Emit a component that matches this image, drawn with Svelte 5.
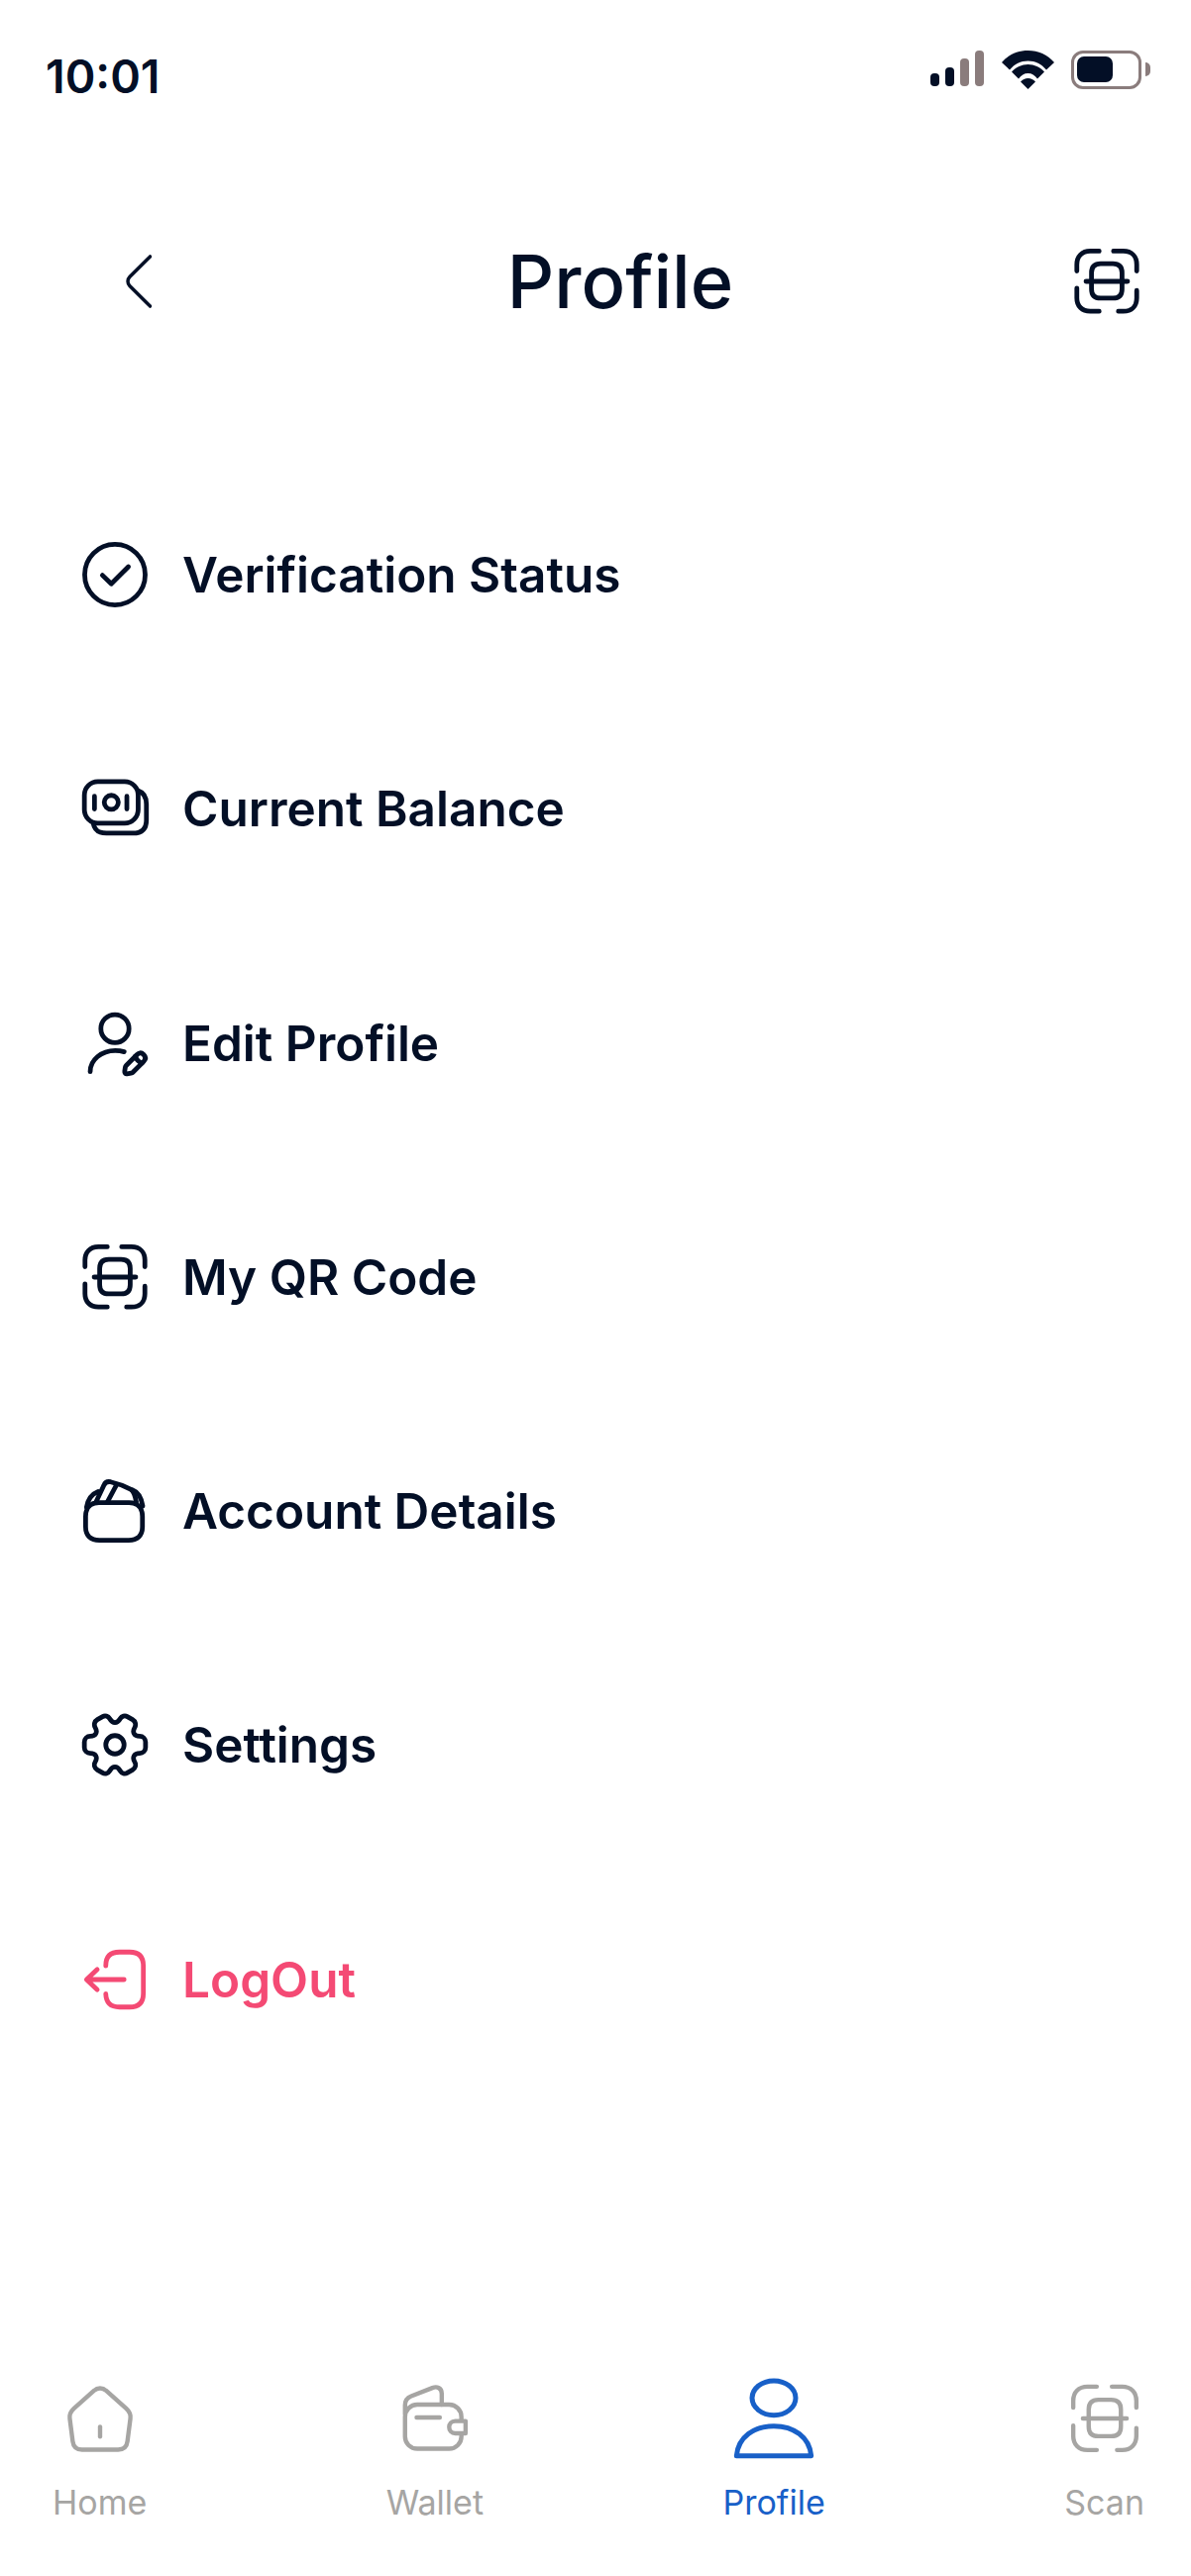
<script>
  const rows = [
    { label: "Verification Status", icon: "check" },
    { label: "Current Balance", icon: "money" },
    { label: "Edit Profile", icon: "user" },
    { label: "My QR Code", icon: "scan" },
    { label: "Account Details", icon: "account" },
    { label: "Settings", icon: "gear" },
    { label: "LogOut", icon: "logout", danger: true },
  ];

  const tabs = [
    { label: "Home", icon: "home" },
    { label: "Wallet", icon: "wallet" },
    { label: "Profile", icon: "person", active: true },
    { label: "Scan", icon: "scan" },
  ];
</script>

{#snippet icon(name)}
  <svg class="ico" viewBox="0 0 24 24" fill="none" stroke="currentColor" stroke-linecap="round" stroke-linejoin="round">
    {#if name === "check"}
      <circle cx="12" cy="12" r="9.9" />
      <path d="M7.9 12.2l2.9 2.8 5.6-5.6" />
    {:else if name === "money"}
      <rect x="2" y="3.2" width="17.600" height="13.600" rx="4.400" />
      <path d="M19.6 6.2c1.8.6 2.7 2 2.7 4.4v5.2c0 3-1.7 4.3-4.4 4.3H9.2c-.8 0-1.5-.1-2-.3-1.2-.4-2-1.4-2.3-2.9" />
      <circle cx="10.8" cy="10" r="2.3" />
      <path d="M5.3 8v4.2M15.9 8v4.2" />
    {:else if name === "user"}
      <circle cx="12" cy="7.2" r="4.6" />
      <path d="M3.9 21.3c0-3.9 3.7-6.9 8.2-6.9.9 0 1.9.1 2.9.4" />
      <path d="M19.21 15.74l-3.54 3.54c-.14.14-.27.4-.3.59l-.19 1.35c-.07.49.27.83.76.76l1.35-.19c.19-.03.46-.16.59-.3l3.54-3.54c.61-.61.9-1.32 0-2.22-.89-.89-1.6-.6-2.21.01Z" />
      <path d="M18.7 16.25c.3 1.08 1.14 1.92 2.22 2.22" />
    {:else if name === "scan"}
      <path d="M2.2 8.6V6.5c0-2.7 1.7-4.4 4.4-4.4h2.9" />
      <path d="M14.2 2.1h3.2c2.7 0 4.4 1.7 4.4 4.4v2.1" />
      <path d="M21.8 15v2.4c0 2.7-1.7 4.4-4.4 4.4h-1.6" />
      <path d="M9.5 21.8H6.6c-2.7 0-4.4-1.7-4.4-4.4V14.200" />
      <path d="M17 9.200v5.300c0 2-1 3-3 3h-4c-2 0-3-1-3-3V9.200c0-2 1-3 3-3h4c2 0 3 1 3 3Z" />
      <path d="M5.200 12h13.600" />
    {:else if name === "account"}
      <path d="M2.400 13.800c0-2.800 1.500-4.500 4.400-4.500h9.800c2.900 0 4.400 1.700 4.400 4.500v3.400c0 2.900-1.700 4.400-4.500 4.400H6.900c-2.800 0-4.500-1.500-4.500-4.400Z" />
      <path d="M5.800 9.100l2.600-5.500c.4-1 1.200-1.300 2.200-1.100 2.200.5 4.500 1.300 6.500 2.400.9.500 1.500 2 1.900 4.200" />
      <path d="M9.500 9.100l2.900-5.400" />
      <path d="M2.700 10.800c.5-2.800 1.700-4.300 3.800-5.100" />
      <path d="M17.700 5.100c1.900.7 3 2.800 3.400 5.300" />
    {:else if name === "gear"}
      <path d="M2 12.880v-1.760c0-1.040.85-1.900 1.900-1.900 1.810 0 2.550-1.280 1.640-2.850-.52-.9-.21-2.070.7-2.590l1.730-.99c.79-.47 1.810-.19 2.280.6l.11.19c.9 1.570 2.380 1.570 3.290 0l.11-.19c.47-.79 1.490-1.070 2.280-.6l1.730.99c.91.520 1.220 1.690.7 2.590-.91 1.570-.17 2.850 1.640 2.850 1.040 0 1.900.85 1.900 1.900v1.760c0 1.040-.85 1.900-1.900 1.900-1.810 0-2.550 1.280-1.640 2.850.52.91.21 2.070-.7 2.590l-1.730.99c-.79.47-1.810.19-2.280-.6l-.11-.19c-.9-1.570-2.380-1.570-3.290 0l-.11.19c-.47.79-1.490 1.070-2.280.6l-1.730-.99a1.900 1.900 0 0 1-.7-2.590c.91-1.570.17-2.850-1.640-2.850-1.050 0-1.900-.86-1.900-1.900Z" />
      <circle cx="12" cy="12" r="3" />
    {:else if name === "logout"}
      <path d="M9 7.500c0-3 1.500-4.500 4.500-4.500h3.300c3 0 4.500 1.500 4.500 4.500v9c0 3-1.500 4.500-4.500 4.500h-3.300c-2.900 0-4.400-1.400-4.500-4.300" />
      <path d="M15 12H2.800M6.200 8.700L2.700 12l3.500 3.300" />
    {:else if name === "home"}
      <path d="M12 2.600c-.7 0-1.300.2-1.800.7L3.900 8.900c-1 .9-1.500 1.900-1.300 3.200l.9 7c.2 1.700 1.200 2.600 2.900 2.600h11.200c1.700 0 2.700-.9 2.900-2.600l.9-7c.2-1.300-.3-2.300-1.300-3.200l-6.300-5.600c-.5-.5-1.100-.7-1.800-.7Z" />
      <path d="M12 14.600v3" />
    {:else if name === "wallet"}
      <rect x="2.700" y="7.700" width="17.500" height="13.700" rx="3.800" />
      <path d="M2.700 10.500V7.900c0-1.400.6-2.300 1.900-2.800l6.600-2.600c1.500-.6 2.900.1 2.900 1.800v3.400" />
      <path d="M6.300 11.700h7.200" />
      <path d="M21.500 12.800h-3.200c-1.200 0-1.900.9-1.900 1.900s.7 1.900 1.900 1.900h3.200Z" fill="white" />
    {:else if name === "person"}
      <ellipse cx="12" cy="5.800" rx="6.600" ry="5.200" />
      <path d="M.7 23.300C1.200 17.600 6 14.300 12 14.300s10.800 3.300 11.300 9Z" />
    {/if}
  </svg>
{/snippet}

<div class="phone">
  <div class="status">
    <span class="time">10:01</span>
    <div class="status-icons">
      <div class="signal">
        <i class="bar on b1"></i>
        <i class="bar on b2"></i>
        <i class="bar b3"></i>
        <i class="bar b4"></i>
      </div>
      <svg class="wifi" viewBox="0 0 53 39">
        <path d="M0 12C7 4 16 0 26.500 0S46 4 53 12l-8 7.500C40 13.500 34 10.500 26.500 10.500S13 13.500 8 19.500Z" />
        <path d="M10 21.500C14.500 16.800 20 14 26.500 14S38.500 16.800 43 21.500L36 28.500C33.500 25 30.500 23 26.500 23S19.500 25 17 28.500Z" />
        <path d="M19 31.500C21 29.200 23.500 28 26.500 28S32 29.200 34 31.500L26.500 39Z" />
      </svg>
      <div class="battery">
        <div class="level"></div>
      </div>
      <div class="nub"></div>
    </div>
  </div>

  <header class="top">
    <svg class="back" viewBox="0 0 24 24" fill="none" stroke="currentColor" stroke-linecap="round" stroke-linejoin="round">
      <path d="M15 19.920L8.480 13.400c-.77-.77-.77-2.030 0-2.800L15 4.080" />
    </svg>
    <h1>Profile</h1>
    {@render icon("scan")}
  </header>

  <nav class="menu">
    {#each rows as row}
      <div class="row" class:danger={row.danger}>
        {@render icon(row.icon)}
        <span>{row.label}</span>
      </div>
    {/each}
  </nav>

  <footer class="tabs">
    {#each tabs as tab}
      <div class="tab" class:active={tab.active}>
        {@render icon(tab.icon)}
        <span>{tab.label}</span>
      </div>
    {/each}
  </footer>
</div>

<style>
  :global(body) {
    background: #fff;
  }

  .phone {
    width: 1202px;
    height: 2600px;
    display: flex;
    flex-direction: column;
    font-family: Inter, "Liberation Sans", sans-serif;
    color: #030f26;
    background: #fff;
    overflow: hidden;
  }

  .ico {
    width: 74px;
    height: 74px;
    flex: none;
    stroke-width: 1.55;
    overflow: visible;
  }

  /* status bar */
  .status {
    height: 100px;
    display: flex;
    justify-content: space-between;
    padding: 51px 41px 0 46px;
    box-sizing: border-box;
  }

  .time {
    font-size: 46.5px;
    font-weight: 600;
    line-height: 52px;
  }

  .status-icons {
    display: flex;
    align-items: flex-start;
  }

  .signal {
    display: flex;
    align-items: flex-end;
    gap: 6px;
    height: 36px;
    margin-right: 18px;
  }

  .bar {
    display: block;
    width: 9px;
    border-radius: 4px;
    background: #8a7c7c;
  }

  .bar.on {
    background: #030f26;
  }

  .b1 { height: 13px; }
  .b2 { height: 19px; }
  .b3 { height: 28px; }
  .b4 { height: 36px; }

  .wifi {
    width: 53px;
    height: 39px;
    fill: #030f26;
    margin-right: 17px;
  }

  .battery {
    width: 71px;
    height: 39px;
    box-sizing: border-box;
    border: 3.5px solid #8a7c7c;
    border-radius: 12px;
    padding: 3px;
  }

  .level {
    width: 36px;
    height: 26px;
    border-radius: 7px;
    background: #030f26;
  }

  .nub {
    width: 5px;
    height: 14px;
    margin: 12px 0 0 4px;
    border-radius: 0 7px 7px 0;
    background: #8a7c7c;
  }

  /* title bar */
  .top {
    display: flex;
    align-items: center;
    justify-content: space-between;
    padding: 144px 48px 0 104px;
  }

  .back {
    width: 76px;
    height: 76px;
    stroke-width: 1.1;
  }

  h1 {
    margin: 0 8px 0 0;
    font-size: 74px;
    font-weight: 500;
    line-height: 80px;
  }

  /* menu */
  .menu {
    display: flex;
    flex-direction: column;
    gap: 156.25px;
    padding: 216px 0 0 79px;
  }

  .row {
    display: flex;
    align-items: center;
    gap: 31px;
    font-size: 49.5px;
    font-weight: 600;
    height: 80px;
  }

  .danger {
    color: #f44a74;
  }

  /* bottom tabs */
  .tabs {
    margin-top: auto;
    display: flex;
    justify-content: space-between;
    padding: 0 47px 52px 53px;
  }

  .tab {
    display: flex;
    flex-direction: column;
    align-items: center;
    gap: 24px;
    font-size: 34px;
    line-height: 44px;
    color: #a6a5a3;
  }

  .tab .ico {
    width: 78px;
    height: 78px;
    stroke-width: 1.35;
  }

  .active {
    color: #1860c8;
  }

  .tab.active .ico {
    width: 80px;
    height: 80px;
    margin: -1px 0;
    stroke-width: 1.5;
  }
</style>
